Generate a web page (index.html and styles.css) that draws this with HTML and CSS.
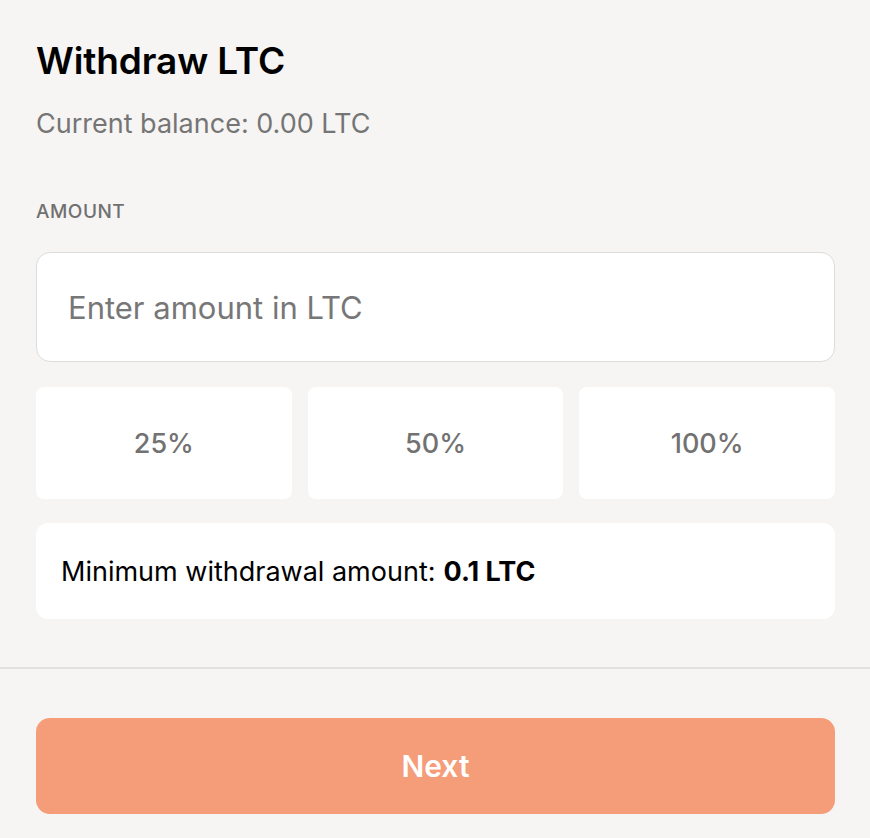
FILE: index.html
```html
<!DOCTYPE html>
<html lang="en">
<head>
  <meta charset="UTF-8">
  <meta name="viewport" content="width=device-width, initial-scale=1.0">
  <title>Withdraw LTC</title>
  <link rel="stylesheet" href="styles.css">
</head>
<body>
  <section class="withdraw">
    <div class="withdraw-body">
      <h1>Withdraw LTC</h1>
      <p class="balance">Current balance: 0.00 LTC</p>
      <label class="field-label" for="amount">Amount</label>
      <input class="amount-input" type="text" id="amount" name="amount" placeholder="Enter amount in LTC">
      <div class="presets">
        <button type="button" class="preset">25%</button>
        <button type="button" class="preset">50%</button>
        <button type="button" class="preset">100%</button>
      </div>
      <div class="notice">
        Minimum withdrawal amount: <strong>0.1 LTC</strong>
      </div>
    </div>
    <div class="withdraw-footer">
      <button type="submit" class="next">Next</button>
    </div>
  </section>
</body>
</html>
```

FILE: styles.css
```css
body {
  margin: 0;
  background: #f6f5f4;
  font-family: Inter, "Noto Sans", sans-serif;
  color: #000;
}
.withdraw {
  min-height: 100vh;
}
.withdraw-body {
  padding: 36px 35px 48px 36px;
  border-bottom: 2px solid #e2e1e0;
}
h1 {
  margin: 0;
  font-size: 37px;
  font-weight: 600;
  line-height: 50px;
  letter-spacing: -0.1px;
}
.balance {
  margin: 20px 0 0;
  font-size: 27px;
  line-height: 36px;
  color: #757575;
}
.field-label {
  display: block;
  margin-top: 59px;
  text-transform: uppercase;
  font-size: 19px;
  font-weight: 500;
  line-height: 22px;
  color: #707070;
  letter-spacing: 0.5px;
}
.amount-input {
  display: block;
  width: 100%;
  box-sizing: border-box;
  height: 110px;
  margin-top: 29px;
  padding: 0 31px;
  border: 1px solid #dcdcdc;
  border-radius: 14px;
  background: #fff;
  font: inherit;
  font-size: 31px;
  color: #333;
  outline: none;
}
.amount-input::placeholder {
  color: #777;
}
.presets {
  display: grid;
  grid-template-columns: repeat(3, 1fr);
  gap: 16px;
  margin-top: 25px;
}
.preset {
  height: 112px;
  border: 0;
  border-radius: 8px;
  background: #fff;
  font: inherit;
  font-size: 27px;
  font-weight: 500;
  color: #727272;
  cursor: pointer;
}
.notice {
  margin-top: 24px;
  padding: 0 25px;
  height: 96px;
  display: flex;
  align-items: center;
  background: #fff;
  border-radius: 12px;
  font-size: 27px;
}
.notice strong {
  font-weight: 700;
  margin-left: 8px;
}
.withdraw-footer {
  padding: 49px 35px 0 36px;
}
.next {
  width: 100%;
  height: 96px;
  border: 0;
  border-radius: 14px;
  background: #f59c78;
  color: #fff;
  font: inherit;
  font-size: 30px;
  font-weight: 600;
  cursor: pointer;
}
```
